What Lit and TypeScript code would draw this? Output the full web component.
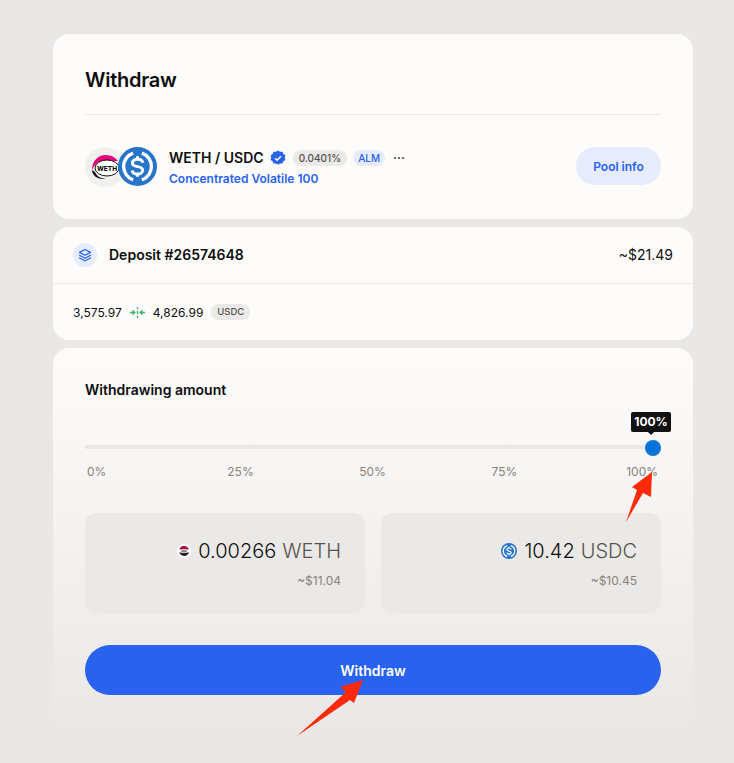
import { LitElement, css, html, svg } from 'lit'
import { customElement } from 'lit/decorators.js'

const usdcIcon = (size: number) => html`
  <svg width=${size} height=${size} viewBox="0 0 40 40">
    <circle cx="20" cy="20" r="20" fill="#2775ca" />
    <path d="M15.5 6.300a14.500 14.500 0 0 0 0 27.400M24.500 6.300a14.500 14.500 0 0 1 0 27.400" fill="none" stroke="#fff" stroke-width="3.400" />
    <path d="M25.500 16.200c-.4-2.400-2.600-3.700-5.500-3.700-3 0-5.300 1.500-5.300 3.900 0 2.400 2.100 3.200 5.300 3.700 3.200.5 5.300 1.300 5.300 3.700 0 2.400-2.300 3.900-5.300 3.900-2.900 0-5.100-1.300-5.500-3.700M20 9.500v3M20 27.500v3" fill="none" stroke="#fff" stroke-width="3" />
  </svg>
`

const wethIcon = (size: number) => html`
  <svg width=${size} height=${size} viewBox="0 0 40 40">
    <circle cx="20" cy="20" r="20" fill="#f1f0ee" />
    <path d="M7 23C7 14 13 8 21 8c5 0 9 2 12 6H20C13 14 9 18 7 23z" fill="#e6007a" />
    <path d="M7 23c0 5 5 9 11 9h5c-6 0-11-2-13-7z" fill="#111" />
    <ellipse cx="22" cy="21" rx="12" ry="8" fill="#fff" stroke="#111" stroke-width="1" />
    ${svg`<text x="22" y="23.500" text-anchor="middle" font-family="Inter, sans-serif" font-size="6.500" font-weight="800" fill="#111">WETH</text>`}
  </svg>
`

// small version in the amount box, the label is only a dark bar there
const wethMini = html`
  <svg width="14" height="14" viewBox="0 0 40 40">
    <circle cx="20" cy="20" r="20" fill="#fff" />
    <path d="M6 20C6 12 12 6 20 6s14 6 14 10H6z" fill="#a3123f" />
    <path d="M6 20c0 8 6 14 14 14s14-6 14-10H6z" fill="#2a2226" />
    <rect x="9" y="16" width="22" height="8" rx="4" fill="#fff" />
    <rect x="12" y="18.500" width="16" height="3" fill="#222" />
  </svg>
`

const arrow = (cls: string, w: number, h: number, points: string) => html`
  <svg class=${cls} width=${w} height=${h} viewBox="0 0 ${w} ${h}">
    <polygon points=${points} fill="#ff2a0a" />
  </svg>
`

@customElement('app-root')
export class AppRoot extends LitElement {
  render() {
    return html`
      <div class="page">
        <section class="card head">
          <h1>Withdraw</h1>
          <div class="pool">
            <div class="logos">
              <span class="weth">${wethIcon(40)}</span>
              <span class="usdc">${usdcIcon(39)}</span>
            </div>
            <div class="pool-text">
              <div class="pool-top">
                <span class="pair">WETH / USDC</span>
                <svg class="verified" width="16" height="16" viewBox="0 0 16 16">
                  <path d="M8 .5l2 1.300 2.400-.1 1 2.200 2 1.400-.6 2.300.6 2.300-2 1.400-1 2.200-2.400-.1-2 1.300-2-1.300-2.400.1-1-2.200-2-1.400.6-2.300L.6 5.300l2-1.400 1-2.200L6 1.800z" fill="#2962ef" />
                  <path d="M5 8.200l2.100 2L11 6.300" fill="none" stroke="#fff" stroke-width="1.500" />
                </svg>
                <span class="chip grey">0.0401%</span>
                <span class="chip blue">ALM</span>
                <span class="dots">···</span>
              </div>
              <div class="strategy">Concentrated Volatile 100</div>
            </div>
            <button class="info">Pool info</button>
          </div>
        </section>

        <section class="card deposit">
          <div class="deposit-top">
            <span class="stack">
              <svg width="14" height="14" viewBox="0 0 24 24" fill="none" stroke="#2962ef" stroke-width="2" stroke-linejoin="round" stroke-linecap="round">
                <path d="M12 2.500l9.500 5-9.500 5-9.500-5z" />
                <path d="M2.500 12.500l9.500 5 9.500-5" />
                <path d="M2.500 17l9.500 5 9.500-5" />
              </svg>
            </span>
            <span class="deposit-name">Deposit #26574648</span>
            <span class="deposit-value">~$21.49</span>
          </div>
          <div class="range">
            <span>3,575.97</span>
            <svg width="15" height="11" viewBox="0 0 15 11" fill="#3fb36f">
              <rect x="6.800" y="0" width="1.400" height="2.200" />
              <rect x="6.800" y="3.700" width="1.400" height="3.600" />
              <rect x="6.800" y="8.800" width="1.400" height="2.200" />
              <path d="M0 4.700h2.500V2.500l3.300 3-3.300 3V6.300H0zM15 4.700h-2.500V2.500l-3.300 3 3.300 3V6.300H15z" />
            </svg>
            <span>4,826.99</span>
            <span class="chip grey small">USDC</span>
          </div>
        </section>

        <section class="card amount">
          <div class="label">Withdrawing amount</div>
          <div class="slider">
            <div class="track"></div>
            <div class="thumb"></div>
            <div class="tip">100%</div>
          </div>
          <div class="marks">
            <span>0%</span><span class="mid">25%</span><span class="mid">50%</span><span class="mid">75%</span><span class="last">100%</span>
          </div>
          <div class="tokens">
            <div class="token">
              <div class="token-main">
                <span class="mini">${wethMini}</span>
                <span>0.00266</span><span class="sym">WETH</span>
              </div>
              <div class="usd">~$11.04</div>
            </div>
            <div class="token">
              <div class="token-main">
                <span class="mini">${usdcIcon(16)}</span>
                <span>10.42</span><span class="sym">USDC</span>
              </div>
              <div class="usd">~$10.45</div>
            </div>
          </div>
          <button class="submit">Withdraw</button>
        </section>

        ${arrow('arrow-one', 28, 52, '26,0 6,15 11,18 0,50 17,21 25,25')}
        ${arrow('arrow-two', 68, 58, '66,0 43,7 49,12 0,56 53,20 57,23')}
      </div>
    `
  }

  static styles = css`
    :host {
      display: block;
      font-family: Inter, 'Liberation Sans', sans-serif;
      color: #0d0d0d;
    }

    .page {
      position: relative;
      box-sizing: border-box;
      width: 734px;
      height: 763px;
      padding: 34px 41px 0 53px;
      display: flex;
      flex-direction: column;
      gap: 8px;
      background: #e9e8e6;
    }

    .card {
      background: #fdfcfb;
      border-radius: 16px;
    }

    .head {
      height: 185px;
      box-sizing: border-box;
      padding: 32px 32px 0;
    }

    h1 {
      margin: 0;
      height: 48px;
      font-size: 20px;
      line-height: 28px;
      font-weight: 600;
      letter-spacing: -0.25px;
      border-bottom: 1px solid #e9e8e6;
    }

    .pool {
      display: flex;
      align-items: center;
      margin-top: 32px;
    }

    .logos {
      display: flex;
      width: 72px;
      flex: none;
    }

    .logos span {
      display: block;
      height: 40px;
    }

    .usdc {
      margin-left: -7px;
    }

    .pool-text {
      flex: 1;
      margin-left: 12px;
    }

    .pool-top {
      display: flex;
      align-items: center;
      height: 20px;
    }

    .pair {
      font-size: 14px;
      font-weight: 600;
    }

    .verified {
      margin-left: 6px;
    }

    .chip {
      display: inline-block;
      font-size: 10px;
      font-weight: 500;
      line-height: 16px;
      padding: 0 6px;
      border-radius: 8px;
    }

    .grey {
      background: #ebeae8;
      color: #55524e;
      margin-left: 7px;
    }

    .blue {
      background: #e6ecfb;
      color: #2962ef;
      margin-left: 6px;
      padding: 0 5px;
    }

    .dots {
      margin-left: 8px;
      font-size: 12px;
      font-weight: 700;
      color: #55524e;
    }

    .strategy {
      margin-top: 3px;
      font-size: 12px;
      font-weight: 600;
      line-height: 16px;
      color: #2962ef;
    }

    .info {
      align-self: flex-start;
      width: 85px;
      height: 38px;
      border: 0;
      border-radius: 19px;
      background: #e6ecfb;
      color: #2962ef;
      font: 600 12px Inter, sans-serif;
    }

    .deposit {
      height: 113px;
    }

    .deposit-top {
      display: flex;
      align-items: center;
      height: 56px;
      padding: 0 20px;
      border-bottom: 1px solid #e9e8e6;
    }

    .stack {
      display: flex;
      align-items: center;
      justify-content: center;
      width: 24px;
      height: 24px;
      border-radius: 50%;
      background: #e6ecfb;
    }

    .deposit-name {
      flex: 1;
      margin: 0 0 2px 12px;
      font-size: 14px;
      font-weight: 600;
    }

    .deposit-value {
      margin-bottom: 2px;
      font-size: 14px;
    }

    .range {
      display: flex;
      align-items: center;
      gap: 8px;
      height: 56px;
      padding: 0 20px;
      font-size: 12px;
    }

    .small {
      margin-left: 0;
      font-size: 9.500px;
    }

    .amount {
      height: 382px;
      box-sizing: border-box;
      padding: 32px 32px 0;
      background: linear-gradient(#fdfcfb, #e9e8e6);
    }

    .label {
      font-size: 14px;
      font-weight: 600;
      line-height: 20px;
    }

    .slider {
      position: relative;
      height: 6px;
      margin-top: 45px;
    }

    .track {
      height: 4px;
      margin-top: 1px;
      border-radius: 2px;
      background: #e9e8e6;
    }

    .thumb {
      position: absolute;
      right: 0;
      top: -5px;
      width: 16px;
      height: 16px;
      border-radius: 50%;
      background: #0a73d9;
    }

    .tip {
      position: absolute;
      right: -10px;
      top: -33px;
      width: 40px;
      height: 20px;
      border-radius: 2px;
      background: #111;
      color: #fff;
      font-size: 12px;
      font-weight: 700;
      line-height: 20px;
      text-align: center;
    }

    .tip::after {
      content: '';
      position: absolute;
      left: 17px;
      top: 20px;
      border: 3px solid transparent;
      border-top-color: #111;
    }

    .marks {
      display: grid;
      grid-template-columns: 1fr repeat(3, 132px) 1fr;
      margin-top: 13px;
      padding: 0 3px 0 2px;
      font-size: 12px;
      line-height: 16px;
      color: #8a8178;
    }

    .mid {
      text-align: center;
    }

    .last {
      text-align: right;
    }

    .tokens {
      display: grid;
      grid-template-columns: 1fr 1fr;
      gap: 16px;
      margin-top: 33px;
    }

    .token {
      height: 100px;
      box-sizing: border-box;
      padding: 24px 24px 0;
      border-radius: 12px;
      background: #ebe9e7;
      text-align: right;
    }

    .token-main {
      display: flex;
      justify-content: flex-end;
      align-items: center;
      gap: 6px;
      font-size: 20px;
      font-weight: 300;
      line-height: 28px;
    }

    .mini {
      display: flex;
      margin-right: 1px;
    }

    .sym {
      color: #55524e;
    }

    .usd {
      margin-top: 8px;
      font-size: 12px;
      line-height: 16px;
      color: #8a8178;
    }

    .submit {
      display: block;
      width: 100%;
      height: 50px;
      margin-top: 32px;
      border: 0;
      border-radius: 25px;
      background: #2962ef;
      color: #fff;
      font: 600 14px Inter, sans-serif;
    }

    .arrow-one {
      position: absolute;
      left: 626px;
      top: 472px;
    }

    .arrow-two {
      position: absolute;
      left: 297px;
      top: 680px;
    }
  `
}

declare global {
  interface HTMLElementTagNameMap {
    'app-root': AppRoot
  }
}
